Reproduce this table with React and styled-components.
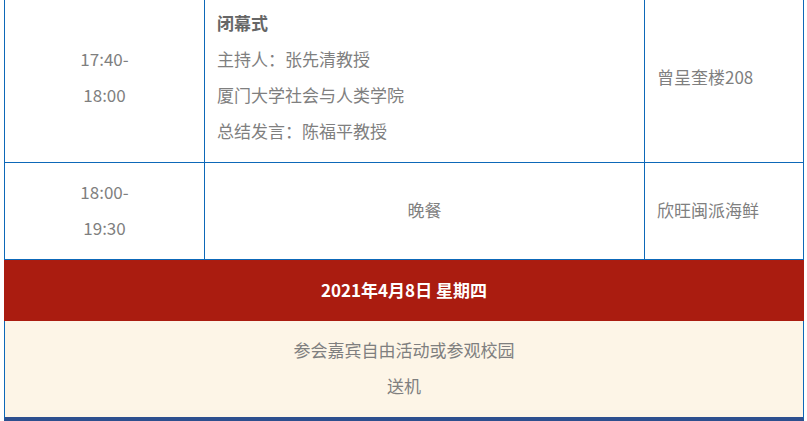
import React from "react";
import styled, { createGlobalStyle } from "styled-components";

const Global = createGlobalStyle`
  html, body { margin: 0; padding: 0; background: #ffffff; overflow: hidden; }
  body { font-family: "Noto Sans CJK SC", "Noto Sans", sans-serif; }
`;

const BLUE = "#0d68b8";

const Schedule = styled.div`
  width: 800px;
  margin: -7px 0 0 4px;
  font-size: 17px;
  line-height: 36px;
  color: #7f7f7f;
`;

const Row = styled.div`
  display: grid;
  grid-template-columns: 200px 440px 158px;
  border-left: 1px solid ${BLUE};
  border-right: 1px solid ${BLUE};
  border-bottom: 1px solid ${BLUE};
  ${(p) => (p.$first ? `border-top: 1px solid ${BLUE};` : "")}
`;

const Cell = styled.div`
  display: flex;
  flex-direction: column;
  justify-content: center;
  padding: 11px 12px 13px;
  box-sizing: border-box;
  text-align: ${(p) => p.$align || "left"};
  align-items: ${(p) => (p.$align === "center" ? "center" : "flex-start")};
  ${(p) => (p.$divider ? `border-right: 1px solid ${BLUE};` : "")}
`;

const Line = styled.div`
  white-space: nowrap;
  font-weight: ${(p) => (p.$bold ? 700 : 400)};
  color: ${(p) => (p.$bold ? "#666666" : "#7f7f7f")};
`;

const DateBand = styled.div`
  height: 61px;
  padding-bottom: 1px;
  box-sizing: border-box;
  background: #aa1c10;
  color: #ffffff;
  font-weight: 700;
  font-size: 17px;
  display: flex;
  align-items: center;
  justify-content: center;
`;

const Notes = styled.div`
  background: #fdf5e7;
  border-left: 1px solid ${BLUE};
  border-right: 1px solid ${BLUE};
  border-bottom: 4px solid #2d4f8e;
  padding: 11px 12px 13px;
  text-align: center;
`;

export default function App() {
  return (
    <>
      <Global />
      <Schedule>
        <Row $first>
          <Cell $align="center" $divider>
            <Line>17:40-</Line>
            <Line>18:00</Line>
          </Cell>
          <Cell $divider>
            <Line $bold>闭幕式</Line>
            <Line>主持人：张先清教授</Line>
            <Line>厦门大学社会与人类学院</Line>
            <Line>总结发言：陈福平教授</Line>
          </Cell>
          <Cell>
            <Line>曾呈奎楼208</Line>
          </Cell>
        </Row>
        <Row>
          <Cell $align="center" $divider>
            <Line>18:00-</Line>
            <Line>19:30</Line>
          </Cell>
          <Cell $align="center" $divider>
            <Line>晚餐</Line>
          </Cell>
          <Cell>
            <Line>欣旺闽派海鲜</Line>
          </Cell>
        </Row>
        <DateBand>2021年4月8日 星期四</DateBand>
        <Notes>
          <Line>参会嘉宾自由活动或参观校园</Line>
          <Line>送机</Line>
        </Notes>
      </Schedule>
    </>
  );
}
